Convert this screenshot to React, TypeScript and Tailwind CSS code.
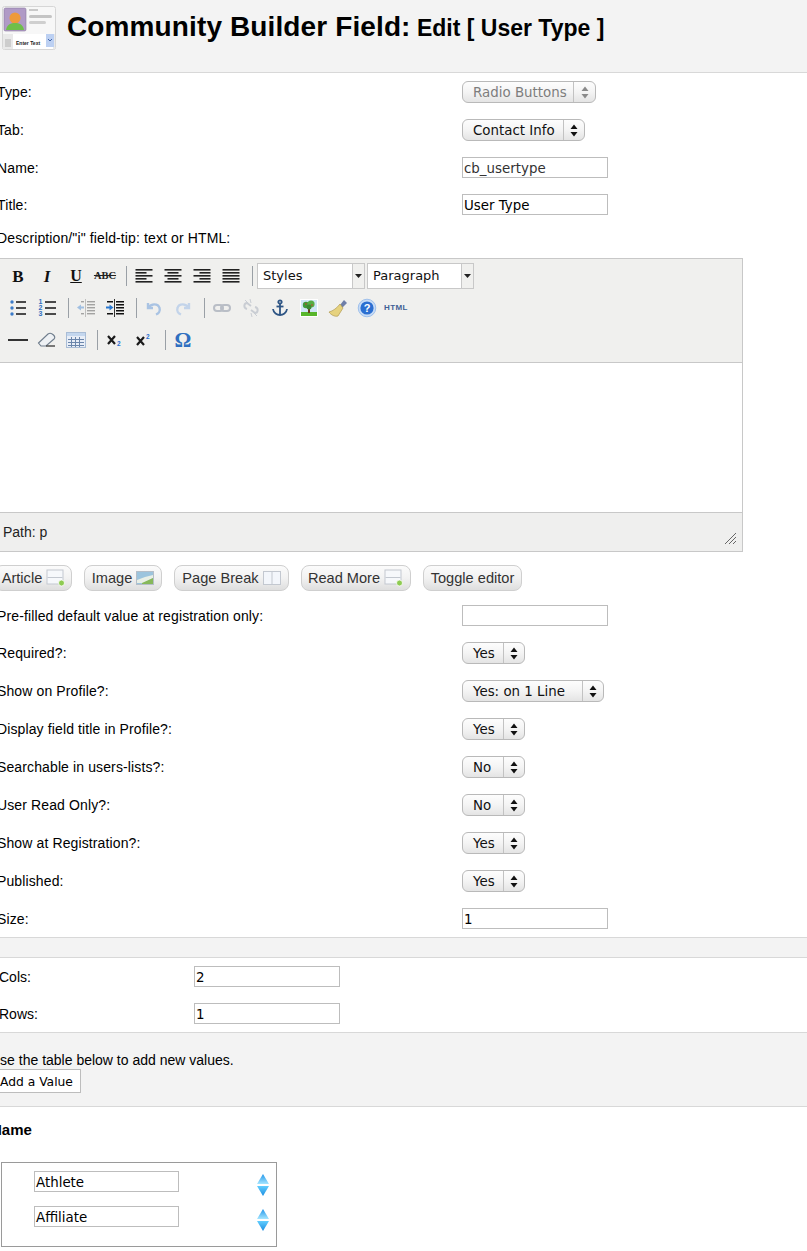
import React from "react";

const LUCIDA = "font-[DejaVu_Sans,sans-serif]";
const SERIF = "font-[Liberation_Serif,serif]";

function Arrows({ disabled }: { disabled?: boolean }) {
  const c = disabled ? "#8a8a8a" : "#111";
  return (
    <svg width="8" height="13" viewBox="0 0 8 13" className="block">
      <path d="M4 0.5 L7.5 5 L0.5 5 Z M4 12.5 L7.5 8 L0.5 8 Z" fill={c} />
    </svg>
  );
}

function Select({ label, w, arrow = 21, disabled }: { label: string; w: string; arrow?: number; disabled?: boolean }) {
  return (
    <div className={`${w} h-[22px] flex items-stretch rounded-[6px] border border-[#b9b9b9] bg-gradient-to-b from-[#fdfdfd] via-[#f4f4f4] to-[#e4e4e4] text-[13.4px] ${LUCIDA} ${disabled ? "text-[#7d7d7d]" : "text-[#111]"}`}>
      <div className="flex-1 pl-[10px] leading-[22px] whitespace-nowrap overflow-hidden">{label}</div>
      <div className="border-l border-[#c2c2c2] flex items-center justify-center" style={{ width: arrow }}>
        <Arrows disabled={disabled} />
      </div>
    </div>
  );
}

function Input({ value, grey, w = "w-[146px]" }: { value?: string; grey?: boolean; w?: string }) {
  return (
    <div className={`${w} h-[21px] border border-[#bdbdbd] bg-white pl-[1px] text-[13.4px] leading-[21px] ${LUCIDA} ${grey ? "text-[#333]" : "text-black"}`}>
      {value}
    </div>
  );
}

function Row({ label, h = "h-[38px]", children }: { label: string; h?: string; children?: React.ReactNode }) {
  return (
    <div className={`${h} flex items-center`}>
      <div className={`w-[465px] shrink-0 whitespace-nowrap tracking-[0.12px] ${h === "h-[37px]" ? "pt-px" : ""}`}>{label}</div>
      {children}
    </div>
  );
}

function Sep() {
  return <div className="w-px h-[20px] bg-[#9aa0a6] ml-[6px] mr-[3px] shrink-0" />;
}

function Cell({ children }: { children: React.ReactNode }) {
  return <div className="w-[29px] h-[20px] shrink-0 flex items-center justify-center">{children}</div>;
}

function Ic({ children, w = 20, h = 20 }: { children: React.ReactNode; w?: number; h?: number }) {
  return (
    <svg width={w} height={h} viewBox={`0 0 ${w} ${h}`} className="block">
      {children}
    </svg>
  );
}

const Lines = ({ kind }: { kind: "l" | "c" | "r" | "j" }) => {
  const rows = [2, 5, 8, 11, 14];
  const short = [0, 1, 0, 1, 0];
  return (
    <Ic w={18} h={18}>
      {rows.map((y, i) => {
        const len = short[i] && kind !== "j" ? 11 : 17;
        const x = kind === "l" || kind === "j" ? 0.5 : kind === "r" ? 17.5 - len : 9 - len / 2;
        return <rect key={y} x={x} y={y} width={len} height={1.6} fill="#222" />;
      })}
    </Ic>
  );
};

function Toolbar() {
  return (
    <div className="h-[104px] bg-[#f0f0ee] border-b border-[#c8c8c8] pl-[3.5px]">
      <div className="h-[33px] flex items-center pt-[1px]">
        <Cell><span className={`${SERIF} font-bold text-[17px] leading-none text-[#111]`}>B</span></Cell>
        <Cell><span className={`${SERIF} font-bold italic text-[17px] leading-none text-[#111]`}>I</span></Cell>
        <Cell><span className={`${SERIF} font-bold underline text-[16px] leading-none text-[#111]`}>U</span></Cell>
        <Cell><span className={`${SERIF} font-bold line-through text-[10.5px] leading-none text-[#222]`}>ABC</span></Cell>
        <Sep />
        <Cell><Lines kind="l" /></Cell>
        <Cell><Lines kind="c" /></Cell>
        <Cell><Lines kind="r" /></Cell>
        <Cell><Lines kind="j" /></Cell>
        <Sep />
        <div className="ml-[1.5px] flex gap-[2px]">
          <MiniSelect label="Styles" w="w-[108px]" />
          <MiniSelect label="Paragraph" w="w-[107px]" />
        </div>
      </div>
      <div className="h-[32px] flex items-center">
        <Cell>
          <Ic w={18} h={18}>
            {[3, 9, 15].map((y) => (
              <g key={y}>
                <circle cx="3" cy={y} r="1.7" fill="#3b7bc8" />
                <rect x="7" y={y - 0.8} width="10" height="1.6" fill="#222" />
              </g>
            ))}
          </Ic>
        </Cell>
        <Cell>
          <Ic w={18} h={18}>
            {[4, 10, 16].map((y, i) => (
              <g key={y}>
                <text x="0.5" y={y + 1} fontSize="7" fontWeight="700" fontFamily="Liberation Sans" fill="#2f6fc0">{i + 1}</text>
                <rect x="7" y={y - 1.8} width="11" height="1.6" fill="#222" />
              </g>
            ))}
          </Ic>
        </Cell>
        <Sep />
        <Cell>
          <Ic w={20} h={20}>
            <g opacity="0.4">
              <rect x="9" y="1" width="1" height="18" fill="#777" />
              {[3, 6, 9, 12, 15].map((y) => <rect key={y} x="11" y={y} width="8" height="1.4" fill="#333" />)}
              {[3, 15].map((y) => <rect key={y} x="5" y={y} width="3" height="1.4" fill="#333" />)}
              <path d="M1 9.5 L5 6.5 V8.5 H8 V10.5 H5 V12.5 Z" fill="#2a78d0" />
            </g>
          </Ic>
        </Cell>
        <Cell>
          <Ic w={20} h={20}>
            <rect x="9" y="1" width="1" height="18" fill="#333" />
            {[3, 6, 9, 12, 15].map((y) => <rect key={y} x="11" y={y} width="8" height="1.5" fill="#111" />)}
            {[3, 15].map((y) => <rect key={y} x="2" y={y} width="6" height="1.5" fill="#111" />)}
            <path d="M8.5 9.5 L4.5 6.5 V8.5 H1 V10.5 H4.5 V12.5 Z" fill="#2a78d0" />
          </Ic>
        </Cell>
        <Sep />
        <Cell>
          <Ic w={18} h={18}>
            <path d="M3 4 V9 H8 M3.5 8.5 C6 4.5 13 4 14.5 9 C15.5 12 13.5 14.5 11 15.5" fill="none" stroke="#a9c3e3" strokeWidth="2.4" />
          </Ic>
        </Cell>
        <Cell>
          <Ic w={18} h={18}>
            <path d="M15 4 V9 H10 M14.5 8.5 C12 4.5 5 4 3.5 9 C2.5 12 4.5 14.5 7 15.5" fill="none" stroke="#c3d4ea" strokeWidth="2.4" />
          </Ic>
        </Cell>
        <Sep />
        <Cell>
          <Ic w={18} h={18}>
            <g fill="none" stroke="#b9bec6" strokeWidth="2">
              <rect x="1" y="6" width="9" height="6" rx="3" />
              <rect x="8" y="6" width="9" height="6" rx="3" />
            </g>
          </Ic>
        </Cell>
        <Cell>
          <Ic w={18} h={20}>
            <g fill="none" stroke="#c9cdd3" strokeWidth="2">
              <path d="M9 8 L5 5 C2 5 1 10 5 11" />
              <path d="M9 12 L13 15 C16 15 17 10 13 9" />
              <path d="M8 1 L9 5 M3 2 L6 5 M15 18 L12 15 M10 19 L9 15" strokeWidth="1" />
            </g>
          </Ic>
        </Cell>
        <Cell>
          <Ic w={18} h={18}>
            <g fill="none" stroke="#2e5584" strokeWidth="1.8">
              <circle cx="9" cy="3" r="1.7" />
              <path d="M9 5 V16" />
              <path d="M5.5 7.5 H12.5" />
              <path d="M2 10 C2.5 14 6 16 9 16 C12 16 15.5 14 16 10" />
            </g>
          </Ic>
        </Cell>
        <Cell>
          <Ic w={18} h={18}>
            <rect x="0" y="0" width="18" height="18" fill="#fff" />
            <rect x="1" y="1" width="16" height="12" fill="#cfe6f7" />
            <rect x="1" y="13" width="16" height="4" fill="#58b62c" />
            <rect x="8" y="8" width="2" height="6" fill="#6b3b1e" />
            <circle cx="6" cy="6" r="3.2" fill="#3f9a3a" />
            <circle cx="11" cy="5" r="3.6" fill="#55ad45" />
            <circle cx="9" cy="8" r="2.5" fill="#3a8a33" />
            <circle cx="6" cy="5" r="0.8" fill="#d23a2a" />
            <circle cx="12" cy="6" r="0.8" fill="#d23a2a" />
          </Ic>
        </Cell>
        <Cell>
          <Ic w={20} h={20}>
            <path d="M12 7 L16 2 L19 5 L14 10 Z" fill="#6f7fa8" />
            <path d="M12 6 L15 10 L10 18 C7 19 3 17 1 14 C5 13 9 10 12 6 Z" fill="#e6d27e" stroke="#b09a50" strokeWidth="0.7" />
          </Ic>
        </Cell>
        <Cell>
          <Ic w={20} h={20}>
            <circle cx="10" cy="10" r="8.8" fill="#c8dcf5" stroke="#8fb6e8" strokeWidth="0.8" />
            <circle cx="10" cy="10" r="6.6" fill="#2b6fd1" />
            <text x="10" y="14" textAnchor="middle" fontSize="11" fontWeight="700" fontFamily="Liberation Sans" fill="#fff">?</text>
          </Ic>
        </Cell>
        <Cell>
          <span className="font-bold text-[8px] tracking-[0.4px] text-[#3f5f95] leading-none">HTML</span>
        </Cell>
      </div>
      <div className="h-[32px] flex items-center">
        <Cell><div className="w-[20px] h-[2px] bg-[#333]" /></Cell>
        <Cell>
          <Ic w={20} h={18}>
            <path d="M1.5 12 L11 3 C12.5 2 15 2.5 16.5 4 C18 5.5 18 7 17 8 L9 15 H4 Z" fill="#eef1f4" stroke="#6f7d8c" strokeWidth="1.1" />
            <path d="M9 15 L18 15" stroke="#444" strokeWidth="1.4" />
          </Ic>
        </Cell>
        <Cell>
          <Ic w={20} h={18}>
            <rect x="0.5" y="1.5" width="19" height="15" fill="#e8eef7" stroke="#a9bdd6" />
            <rect x="1" y="2" width="18" height="3" fill="#c4d7ee" />
            {[5, 9, 13].map((x) => <rect key={x} x={x} y="6" width="1" height="10" fill="#6b86ab" />)}
            {[8, 11, 14].map((y) => <rect key={y} x="2" y={y} width="16" height="1" fill="#6b86ab" />)}
          </Ic>
        </Cell>
        <Sep />
        <Cell>
          <Ic w={16} h={14}>
            <path d="M1 3 L8 11 M8 3 L1 11" stroke="#1a1a1a" strokeWidth="2.2" />
            <text x="10" y="13" fontSize="6.5" fontWeight="700" fontFamily="Liberation Sans" fill="#2b6fd1">2</text>
          </Ic>
        </Cell>
        <Cell>
          <Ic w={16} h={14}>
            <path d="M1 4 L8 12 M8 4 L1 12" stroke="#1a1a1a" strokeWidth="2.2" />
            <text x="10" y="6" fontSize="6.5" fontWeight="700" fontFamily="Liberation Sans" fill="#2b6fd1">2</text>
          </Ic>
        </Cell>
        <Sep />
        <Cell><span className={`${SERIF} font-bold text-[21px] leading-none text-[#2f6fc0]`}>Ω</span></Cell>
      </div>
    </div>
  );
}

function MiniSelect({ label, w }: { label: string; w: string }) {
  return (
    <div className={`${w} h-[26px] flex border border-[#c8c8c8] bg-white text-[13px] text-[#111] ${LUCIDA}`}>
      <div className="flex-1 pl-[5px] leading-[24px]">{label}</div>
      <div className="w-[12px] bg-[#f0f0ee] border-l border-[#c8c8c8] flex items-center justify-center">
        <svg width="7" height="4" viewBox="0 0 7 4" className="block"><path d="M0 0 H7 L3.5 4 Z" fill="#222" /></svg>
      </div>
    </div>
  );
}

function AddIcon() {
  return (
    <svg width="20" height="18" viewBox="0 0 20 18" className="block">
      <rect x="1" y="1" width="16" height="14" fill="#f6f8fb" stroke="#c3c8d0" />
      <rect x="1.5" y="8" width="15" height="1" fill="#c3c8d0" />
      <circle cx="15.5" cy="14" r="3" fill="#8ecb52" stroke="#fff" strokeWidth="0.8" />
    </svg>
  );
}

function ImgIcon() {
  return (
    <svg width="18" height="16" viewBox="0 0 18 16" className="block">
      <rect x="0.5" y="1.5" width="17" height="13" fill="#9cc4dd" stroke="#b5bec8" />
      <path d="M1 10 L9 7 L17 5 V8 L8 13 H1 Z" fill="#e9efe6" />
      <path d="M6 13 L17 8 V14 H6 Z" fill="#86b85a" />
    </svg>
  );
}

function PageIcon() {
  return (
    <svg width="18" height="16" viewBox="0 0 18 16" className="block">
      <rect x="0.5" y="1.5" width="17" height="13" fill="#f3f6fb" stroke="#c3c8d0" />
      <rect x="8.5" y="2" width="1" height="12" fill="#c3c8d0" />
    </svg>
  );
}

function EdBtn({ label, icon, w }: { label: string; icon?: React.ReactNode; w: string }) {
  return (
    <div className={`${w} h-[26px] shrink-0 flex items-center justify-center gap-[4px] rounded-[8px] border border-[#cfcfcf] bg-gradient-to-b from-[#fbfbfb] via-[#f2f2f2] to-[#dedede] text-[14.6px] text-[#333] whitespace-nowrap`}>
      <span className="pt-px">{label}</span>
      {icon}
    </div>
  );
}

function SortArrows() {
  return (
    <svg width="12" height="22" viewBox="0 0 12 22" className="block mt-[3px]">
      <defs>
        <linearGradient id="saUp" x1="0" y1="0" x2="0" y2="1">
          <stop offset="0" stopColor="#2196ea" />
          <stop offset="1" stopColor="#a6e6ff" />
        </linearGradient>
        <linearGradient id="saDown" x1="0" y1="0" x2="0" y2="1">
          <stop offset="0" stopColor="#62ceff" />
          <stop offset="1" stopColor="#1c8de0" />
        </linearGradient>
      </defs>
      <path d="M6 0 L12 10 H0 Z" fill="url(#saUp)" />
      <path d="M0 12 H12 L6 22 Z" fill="url(#saDown)" />
    </svg>
  );
}

function Logo() {
  return (
    <svg width="54" height="44" viewBox="0 0 54 44" className="block">
      <rect x="0.5" y="0.5" width="53" height="43" rx="2" fill="#f7f7f7" stroke="#d6d6d6" />
      <rect x="2" y="2" width="22" height="23" rx="1.5" fill="#b09ac6" stroke="#8a78a0" strokeWidth="0.6" />
      <circle cx="13" cy="12" r="5.5" fill="#ee9a3a" />
      <path d="M4 24 C5 18 9 17 13 17 C17 17 21 18 22 24 Z" fill="#6fbe4a" />
      <rect x="27" y="9" width="23" height="3" rx="1.5" fill="#c4c4c4" />
      <rect x="27" y="15" width="17" height="3" rx="1.5" fill="#cfcfcf" />
      <rect x="27" y="3" width="9" height="2" fill="#c9c9c9" />
      <rect x="1" y="28" width="52" height="15" fill="#e9e9e9" />
      <rect x="11" y="28" width="40" height="15" fill="#ffffff" />
      <text x="14" y="39" fontSize="5" fontWeight="700" fontFamily="Liberation Sans" fill="#222">Enter Text</text>
      <rect x="44" y="28" width="8" height="13" fill="#bcd0f2" />
      <path d="M46 33 L48 35 L50 33" stroke="#4468aa" fill="none" />
      <rect x="3" y="33" width="6" height="8" fill="#cdcdcd" />
    </svg>
  );
}

export default function App() {
  return (
    <div className="w-[807px] h-[1251px] overflow-hidden bg-white text-black text-[14px] font-[Liberation_Sans,Arial,sans-serif]">
      <div className="h-[73px] bg-[#f3f3f3] border-b border-[#d8d8d8] flex pl-[2px] pt-[6px]">
        <Logo />
        <div className="ml-[11px] mt-[3px] font-bold whitespace-nowrap leading-[36px]">
          <span className="text-[28px] tracking-[0.12px]">Community Builder Field:</span>
          <span className="text-[23px]"> Edit [ User Type ]</span>
        </div>
      </div>

      <div className="-ml-[3px]">
        <Row label="Type:"><Select label="Radio Buttons" w="w-[134px]" arrow={22} disabled /></Row>
        <Row label="Tab:"><Select label="Contact Info" w="w-[123px]" /></Row>
        <Row label="Name:" h="h-[37px]"><Input value="cb_usertype" grey /></Row>
        <Row label="Title:" h="h-[37px]"><Input value="User Type" /></Row>
        <Row label="Description/&quot;i&quot; field-tip: text or HTML:" h="h-[30px]" />
      </div>

      <div className="mt-[5px] w-[744px] -ml-[1px] h-[294px] border border-[#c8c8c8] bg-white flex flex-col">
        <Toolbar />
        <div className="flex-1" />
        <div className="h-[39px] bg-[#efefee] border-t border-[#c8c8c8] flex items-center pl-[3px] text-[14px] text-[#222] relative">
          Path: p
          <svg width="13" height="13" viewBox="0 0 13 13" className="absolute right-[5px] bottom-[6px]">
            <path d="M1 12 L12 1 M5 12 L12 5 M9 12 L12 9" stroke="#666" strokeWidth="1" />
          </svg>
        </div>
      </div>

      <div className="mt-[13px] -ml-[6px] flex gap-[12px]">
        <EdBtn label="Article" icon={<AddIcon />} w="w-[78px] pl-[2px]" />
        <EdBtn label="Image" icon={<ImgIcon />} w="w-[78px]" />
        <EdBtn label="Page Break" icon={<PageIcon />} w="w-[115px]" />
        <EdBtn label="Read More" icon={<AddIcon />} w="w-[110px]" />
        <EdBtn label="Toggle editor" w="w-[99px]" />
      </div>

      <div className="mt-[6px] -ml-[3px]">
        <Row label="Pre-filled default value at registration only:" h="h-[37px]"><Input /></Row>
        <Row label="Required?:"><Select label="Yes" w="w-[63px]" /></Row>
        <Row label="Show on Profile?:"><Select label="Yes: on 1 Line" w="w-[142px]" /></Row>
        <Row label="Display field title in Profile?:"><Select label="Yes" w="w-[63px]" /></Row>
        <Row label="Searchable in users-lists?:"><Select label="No" w="w-[63px]" /></Row>
        <Row label="User Read Only?:"><Select label="No" w="w-[63px]" /></Row>
        <Row label="Show at Registration?:"><Select label="Yes" w="w-[63px]" /></Row>
        <Row label="Published:"><Select label="Yes" w="w-[63px]" /></Row>
        <Row label="Size:" h="h-[37px]"><Input value="1" /></Row>
      </div>

      <div className="h-[21px] bg-[#f3f3f3] border-y border-[#d8d8d8]" />

      <div className="-ml-[1px]">
        <div className="h-[37px] flex items-center">
          <div className="w-[195px] pt-px">Cols:</div>
          <Input value="2" />
        </div>
        <div className="h-[37px] flex items-center">
          <div className="w-[195px] pt-px">Rows:</div>
          <Input value="1" />
        </div>
      </div>

      <div className="h-[75px] bg-[#f3f3f3] border-y border-[#d8d8d8] -ml-[10px] pt-[19px]">
        <div className="leading-[16px] whitespace-nowrap">Use the table below to add new values.</div>
        <div className={`ml-[4px] mt-[1px] w-[87px] h-[24px] bg-white border border-[#bdbdbd] pl-[5px] text-[12.3px] leading-[24px] whitespace-nowrap ${LUCIDA}`}>Add a Value</div>
      </div>

      <div className="-ml-[9px] pt-[15px] font-bold text-[15px] leading-[16px]">Name</div>

      <div className="mt-[24px] ml-[1px] w-[276px] h-[85px] border border-[#9a9a9a] pl-[32px] pr-[7px] pt-[8px] flex flex-col gap-[14px]">
        {["Athlete", "Affiliate"].map((v) => (
          <div key={v} className="flex items-start justify-between h-[21px]">
            <Input value={v} w="w-[145px]" />
            <SortArrows />
          </div>
        ))}
      </div>
    </div>
  );
}
